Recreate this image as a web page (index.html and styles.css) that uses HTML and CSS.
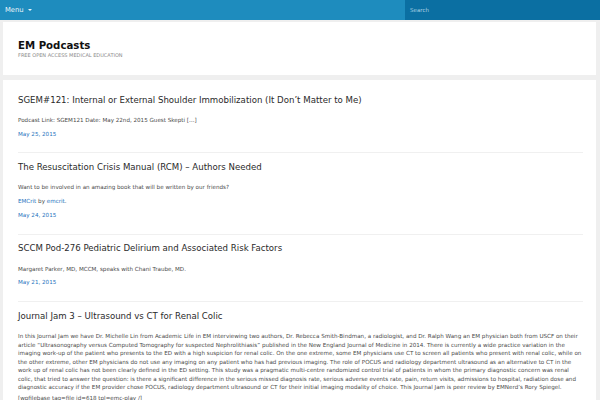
FILE: index.html
```html
<!DOCTYPE html>
<html>
<head>
<meta charset="utf-8">
<link rel="stylesheet" href="styles.css">
</head>
<body>
<nav class="topbar">
  <div class="menu">Menu <span class="caret"></span></div>
  <div class="search">Search</div>
</nav>
<header class="site-header">
  <div class="site-title">EM Podcasts</div>
  <div class="tagline">FREE OPEN ACCESS MEDICAL EDUCATION</div>
</header>
<main class="content">
  <article class="post">
    <h2 class="post-title">SGEM#121: Internal or External Shoulder Immobilization (It Don’t Matter to Me)</h2>
    <p class="text">Podcast Link: SGEM121 Date: May 22nd, 2015 Guest Skepti […]</p>
    <p class="date">May 25, 2015</p>
  </article>
  <article class="post">
    <h2 class="post-title">The Resuscitation Crisis Manual (RCM) – Authors Needed</h2>
    <p class="text">Want to be involved in an amazing book that will be written by our friends?</p>
    <p class="text"><span class="link">EMCrit</span> by <span class="link">emcrit</span>.</p>
    <p class="date">May 24, 2015</p>
  </article>
  <article class="post">
    <h2 class="post-title">SCCM Pod-276 Pediatric Delirium and Associated Risk Factors</h2>
    <p class="text">Margaret Parker, MD, MCCM, speaks with Chani Traube, MD.</p>
    <p class="date">May 21, 2015</p>
  </article>
  <article class="post">
    <h2 class="post-title">Journal Jam 3 – Ultrasound vs CT for Renal Colic</h2>
    <p class="text para">In this Journal Jam we have Dr. Michelle Lin from Academic Life in EM interviewing two authors, Dr. Rebecca Smith-Bindman, a radiologist, and Dr. Ralph Wang an EM physician both from USCF on their article “Ultrasonography versus Computed Tomography for suspected Nephrolithiasis” published in the New England Journal of Medicine in 2014. There is currently a wide practice variation in the imaging work-up of the patient who presents to the ED with a high suspicion for renal colic. On the one extreme, some EM physicians use CT to screen all patients who present with renal colic, while on the other extreme, other EM physicians do not use any imaging on any patient who has had previous imaging. The role of POCUS and radiology department ultrasound as an alternative to CT in the work up of renal colic has not been clearly defined in the ED setting. This study was a pragmatic multi-centre randomized control trial of patients in whom the primary diagnostic concern was renal colic, that tried to answer the question: is there a significant difference in the serious missed diagnosis rate, serious adverse events rate, pain, return visits, admissions to hospital, radiation dose and diagnostic accuracy if the EM provider chose POCUS, radiology department ultrasound or CT for their initial imaging modality of choice. This Journal Jam is peer review by EMNerd’s Rory Spiegel.</p>
    <p class="text short">[wpfilebase tag=file id=618 tpl=emc-play /]</p>
  </article>
</main>
</body>
</html>
```
FILE: styles.css
```css
html, body {
  margin: 0;
  padding: 0;
}
body {
  background: #efefef;
  font-family: "DejaVu Sans", sans-serif;
  color: #3a3a3a;
  width: 600px;
  height: 400px;
  overflow: hidden;
}
.topbar {
  display: flex;
  height: 20px;
  background: #1e8cbe;
  color: #fff;
}
.menu {
  flex: 1;
  display: flex;
  align-items: center;
  padding-left: 5px;
  font-size: 6.8px;
  color: #e8f3f9;
}
.caret {
  display: inline-block;
  margin-left: 4px;
  width: 0;
  height: 0;
  border-left: 2.5px solid transparent;
  border-right: 2.5px solid transparent;
  border-top: 2.5px solid #e8f3f9;
}
.search {
  width: 190px;
  background: #0b6fa2;
  display: flex;
  align-items: center;
  padding-left: 5px;
  font-size: 5.5px;
  color: #a8cfe3;
}
.site-header {
  margin: 2px 4px 0 3px;
  background: #fff;
  height: 53px;
  padding-left: 15px;
  box-sizing: border-box;
  display: flex;
  flex-direction: column;
  justify-content: center;
}
.site-title {
  font-size: 10.2px;
  font-weight: bold;
  color: #111;
  line-height: 12px;
}
.tagline {
  font-size: 5px;
  color: #8a8a8a;
  margin-top: 0;
}
.content {
  margin: 5px 4px 0 3px;
  background: #fff;
  padding: 10px 13px 0 15px;
  min-height: 400px;
}
.post {
  padding: 3px 0 14.2px;
  border-bottom: 1px solid #f0f0f0;
}
.post + .post {
  padding-top: 6.8px;
}
.post-title {
  margin: 0;
  font-size: 8.6px;
  font-weight: normal;
  color: #2a2a2a;
  line-height: 14px;
}
.text {
  margin: 9.2px 0 0;
  font-size: 5.6px;
  line-height: 8.6px;
  color: #4a4a4a;
}
.text + .text {
  margin-top: 5.4px;
}
.text + .short {
  margin-top: 2.4px;
}
.link, .date {
  color: #1e73be;
}
.date {
  margin: 4.9px 0 0;
  font-size: 5.6px;
  line-height: 8.6px;
}
```
